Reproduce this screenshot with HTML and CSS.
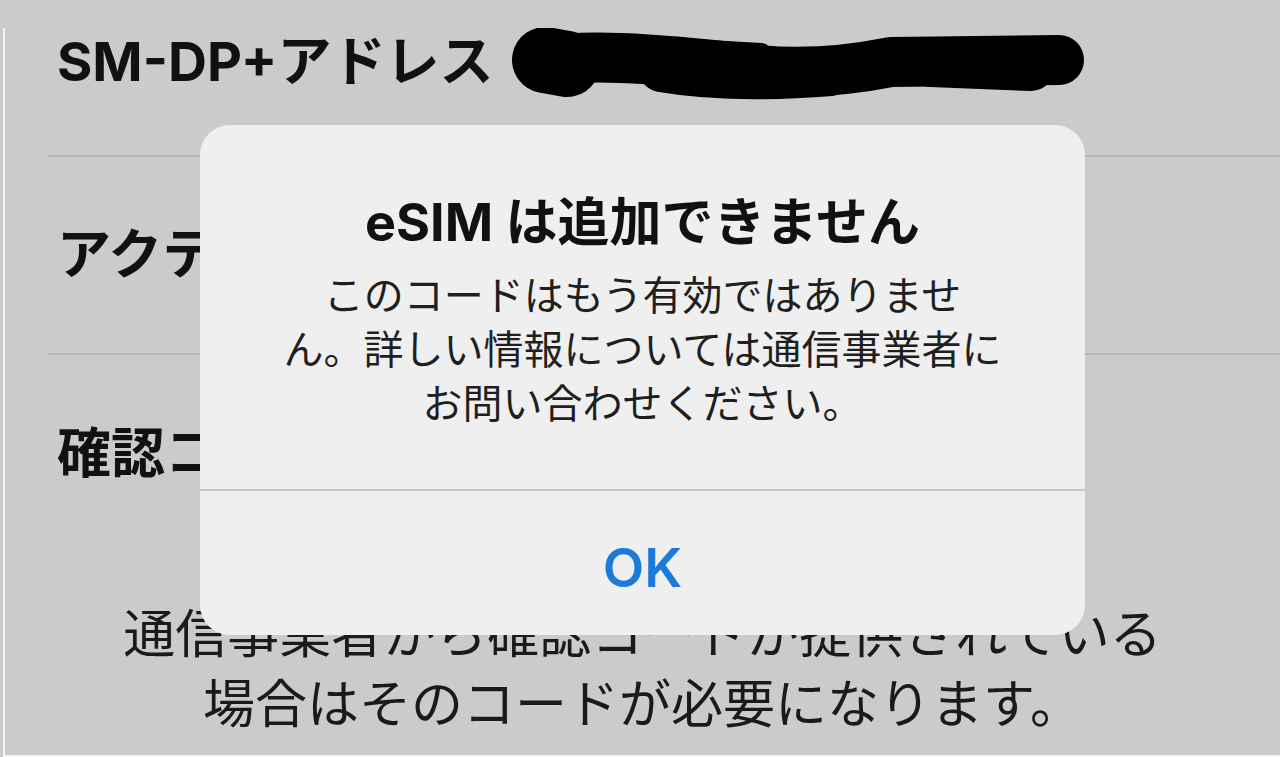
FILE: index.html
```html
<!DOCTYPE html>
<html lang="ja">
<head>
    <meta charset="UTF-8">
    <meta name="viewport" content="width=device-width, initial-scale=1.0">
    <title>eSIM</title>
    <link rel="stylesheet" href="styles.css">
</head>
<body>
    <div class="pantalla">
        <div class="lista">
            <div class="fila primera">
                <span class="etiqueta">SM-DP+アドレス</span>
                <svg class="tachado" width="590" height="80" viewBox="0 0 590 80">
                    <g fill="none" stroke="#000" stroke-linecap="round" stroke-linejoin="round">
                        <path d="M34 42 Q 60 36 110 38 T 230 48 Q 300 58 380 42 L 548 40" stroke-width="50"/>
                        <path d="M34 40 L 56 44" stroke-width="66"/>
                        <path d="M150 50 Q 220 62 320 54" stroke-width="44"/>
                        <path d="M420 44 L 520 48" stroke-width="46"/>
                        <path d="M180 30 L 250 34" stroke-width="22"/>
                    </g>
                </svg>
            </div>
            <div class="fila">
                <span class="etiqueta">アクティベーションコード</span>
            </div>
            <div class="fila ultima">
                <span class="etiqueta">確認コード</span>
            </div>
        </div>
        <p class="nota">通信事業者から確認コードが提供されている<br>場合はそのコードが必要になります。</p>
    </div>

    <div class="alerta">
        <div class="alerta-cuerpo">
            <h2>eSIM は追加できません</h2>
            <p>このコードはもう有効ではありませ<br>ん。詳しい情報については通信事業者に<br>お問い合わせください。</p>
        </div>
        <button type="button">OK</button>
    </div>
</body>
</html>
```

FILE: styles.css
```css
body {
    margin: 0;
    padding: 28px 0 0 3px;
    height: 100vh;
    box-sizing: border-box;
    background-color: #cbcbcb;
    font-family: Inter, "Noto Sans CJK JP", sans-serif;
    color: #111;
    overflow: hidden;
}

.pantalla {
    height: 100%;
    box-sizing: border-box;
    border-left: 2px solid #f4f4f4;
    border-bottom: 2px solid #f4f4f4;
}

.lista {
    margin-left: 43px;
}

.fila {
    display: flex;
    align-items: center;
    height: 198px;
    box-sizing: border-box;
    padding-left: 9px;
    border-bottom: 2px solid #b9b9b9;
    white-space: nowrap;
    overflow: hidden;
}

.fila.primera {
    height: 129px;
    align-items: flex-start;
}

.fila.ultima {
    border-bottom: none;
}

.etiqueta {
    font-size: 54px;
    font-weight: 700;
    line-height: 68px;
}

.tachado {
    margin: -8px 0 0 18px;
}

.nota {
    margin: 0;
    padding-top: 47px;
    text-align: center;
    font-size: 52px;
    line-height: 70px;
    color: #1a1a1a;
}

.alerta {
    position: absolute;
    left: 200px;
    top: 125px;
    width: 885px;
    height: 510px;
    display: flex;
    flex-direction: column;
    border-radius: 30px;
    background-color: #efefef;
    overflow: hidden;
}

.alerta-cuerpo {
    padding: 70px 10px 0;
    height: 366px;
    box-sizing: border-box;
    border-bottom: 2px solid #c6c6c6;
    text-align: center;
}

.alerta h2 {
    margin: 0;
    font-size: 52px;
    font-weight: 700;
    line-height: 56px;
    color: #111;
}

.alerta p {
    margin: 18px 0 0;
    font-size: 40px;
    line-height: 54px;
    color: #1f1f1f;
}

.alerta button {
    flex: 1;
    border: none;
    background: none;
    padding: 8px 0 0;
    font-family: Inter, sans-serif;
    font-size: 54px;
    font-weight: 600;
    color: #1c7ad9;
}
```
